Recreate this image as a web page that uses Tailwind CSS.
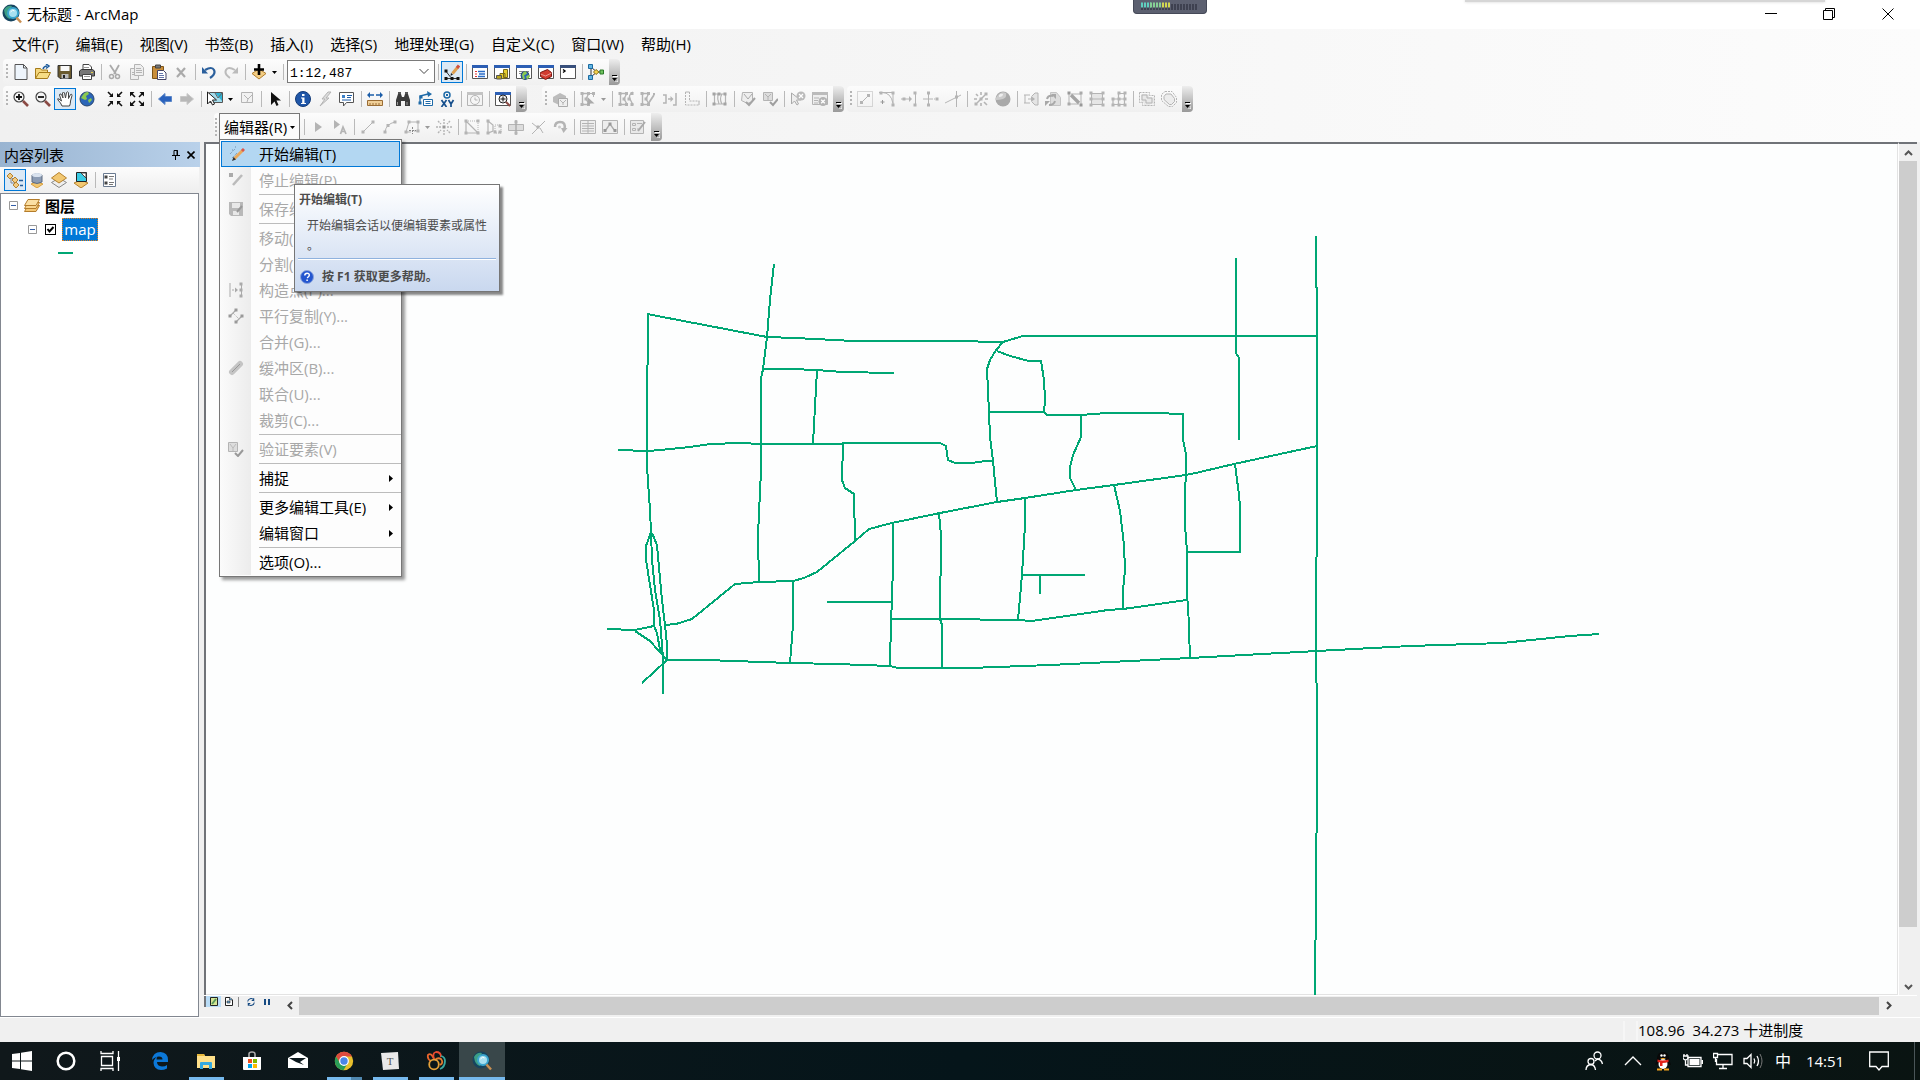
<!DOCTYPE html>
<html lang="zh-CN">
<head>
  <meta charset="UTF-8">
  <meta name="viewport" content="width=device-width, initial-scale=1.0">
  <title>无标题 - ArcMap</title>
  <script src="https://cdn.jsdelivr.net/npm/@tailwindcss/browser@4"></script>
</head>
<body class="h-screen flex flex-col overflow-hidden bg-[#f0f0f0] text-black text-[15px] leading-5 font-['Open_Sans','Noto_Sans_CJK_SC',sans-serif]">

  <!-- Title bar -->
  <header class="relative h-[29px] shrink-0 bg-white flex items-center pb-[2px]">
    <svg class="w-5 h-5 ml-[2px] mr-[5px]" viewBox="0 0 20 20" data-icon="arcmap"></svg>
    <h1>无标题 - ArcMap</h1>
    <div class="ml-auto mr-[2px] flex">
      <button aria-label="最小化" class="w-[59px] h-7 flex items-center justify-center"><svg class="w-3 h-3" viewBox="0 0 12 12"><path d="M0 5.500h12" stroke="#000"/></svg></button>
      <button aria-label="还原" class="w-[58px] h-7 flex items-center justify-center"><svg class="w-3 h-3" viewBox="0 0 12 12"><path d="M.5 2.500h9v9h-9zM2.500 2.500v-2h9v9h-2" fill="none" stroke="#000"/></svg></button>
      <button aria-label="关闭" class="w-[60px] h-7 flex items-center justify-center"><svg class="w-3 h-3" viewBox="0 0 12 12"><path d="M.5 .5l11 11M11.500 .5l-11 11" stroke="#000"/></svg></button>
    </div>
    <!-- floating meter -->
    <div class="absolute top-0 left-[59%] w-[74px] h-[14px] rounded-b-[4px] bg-[#5c6070] border-b border-x border-[#454958]">
      <svg class="ml-[7px] mt-[2px]" width="58" height="8">
        <path d="M0 5h57" stroke="#3e4150" stroke-width="6" stroke-dasharray="2 1"/>
        <path d="M0 3h10" stroke="#5fd0c0" stroke-width="5" stroke-dasharray="2 1"/>
        <path d="M9 3h12" stroke="#86cf95" stroke-width="5" stroke-dasharray="2 1"/>
        <path d="M21 3h9" stroke="#d2d850" stroke-width="5" stroke-dasharray="2 1"/>
      </svg>
    </div>
    <div class="absolute top-0 right-[95px] w-[360px] h-[2px] bg-[#d6d6d6] shadow-[0_0_3px_#ccc]"></div>
  </header>

  <!-- Menus and toolbars -->
  <div class="shrink-0 h-[113px] bg-linear-to-r from-[#f0f0f0] to-[#fcfcfc]">
    <nav class="h-[30px] flex items-center gap-[17px] pl-3 pb-px" id="menuBar"></nav>

    <div class="h-[27px] flex items-start pl-[3px]">
      <div class="h-[26px] flex rounded-sm bg-linear-to-b from-[#fcfcfc] to-[#f0f0f0]">
        <div class="flex items-center" data-tools="new open save print | cut copy paste delete | undo redo | adddata,v |"></div>
        <div class="relative ml-px w-[148px] h-[23px] mt-px border border-[#7a7a7a] bg-white">
          <select aria-label="地图比例" class="appearance-none w-full h-full pl-[2px] text-[13px] font-['Liberation_Mono',monospace] bg-transparent outline-none"><option>1:12,487</option></select>
          <svg class="absolute right-[5px] top-[7px] w-[10px] h-[7px] pointer-events-none" viewBox="0 0 10 7"><path d="M.5 1l4.500 4.500L9.500 1" fill="none" stroke="#444"/></svg>
        </div>
        <div class="flex items-center" data-tools="| edittb,on | toc catalog search toolbox python | model" data-nogrip></div>
        <div class="ml-[2px]" data-overflow></div>
      </div>
    </div>

    <div class="h-[27px] flex items-start pl-[3px]">
      <div class="h-[26px] flex rounded-sm bg-linear-to-b from-[#fcfcfc] to-[#f0f0f0]">
        <div class="flex items-center" data-tools="zoomin zoomout pan,on globe _ fixin fixout | prev next | selfeat,v clearsel | pointer | info bolt popup | measure | find route xy | time | viewer"></div>
        <div class="ml-[2px]" data-overflow></div>
      </div>
      <div class="ml-[15px] h-[26px] flex rounded-sm bg-linear-to-b from-[#fcfcfc] to-[#f0f0f0]">
        <div class="flex items-center" data-tools="cube | topoedit,v | polys polyslash alignedge gencorner | topopoly | checkshape checkbox | pointerr tableerr"></div>
        <div class="ml-[2px]" data-overflow></div>
      </div>
      <div class="ml-[3px] h-[26px] flex rounded-sm bg-linear-to-b from-[#fcfcfc] to-[#f0f0f0]">
        <div class="flex items-center" data-tools="dotsegment fillet extend trim intersect | explode sphere | shapein replace wrench rect grid | union buffer2"></div>
        <div class="ml-[2px]" data-overflow></div>
      </div>
    </div>

    <div class="h-[29px] flex items-start pl-[214px]">
      <div class="h-[28px] flex items-center rounded-sm bg-linear-to-b from-[#fcfcfc] to-[#f0f0f0]">
        <svg class="w-[5px] h-5" viewBox="0 0 5 20"><path d="M2 1v18" stroke="#b5b5b5" stroke-width="2" stroke-dasharray="2 2"/></svg>
        <div class="relative z-20">
          <button class="w-[81px] h-7 pb-px border border-b-0 border-[#777] bg-[#fbfbfb] flex items-center pl-1 whitespace-nowrap gap-[3px]" aria-expanded="true">编辑器(R)<svg class="w-[5px] h-[3px]" viewBox="0 0 5 3"><path d="M0 0h5L2.500 3z"/></svg></button>

          <div class="absolute left-0 top-[26px] w-[183px] border border-[#777] bg-[#fdfdfd] shadow-[3px_3px_3px_#0006] py-px" role="menu" id="editorMenu"></div>

          <!-- Tooltip of the first menu item -->
          <div role="tooltip" class="absolute left-[75px] top-[71px] w-[206px] h-[108px] border border-[#767676] bg-linear-to-b from-white to-[#c9d8ef] shadow-[3px_3px_2px_#0007] text-[12px] leading-5 text-[#4c4c4c]">
            <p class="pl-1 pt-[5px] font-bold">开始编辑(T)</p>
            <p class="pl-3 pt-[6px] whitespace-nowrap">开始编辑会话以便编辑要素或属性<br>。</p>
            <div class="mx-[3px] mt-[2px] h-[2px] bg-[#8fb2de] border-b border-white"></div>
            <p class="pl-[5px] pt-[7px] flex items-center font-bold gap-2">
              <svg class="w-[14px] h-[14px]" viewBox="0 0 14 14"><circle cx="7" cy="7" r="6.500" fill="#2456cf" stroke="#8aa4dc"/><path d="M4.800 5.500q0-2.300 2.300-2.300t2.200 2q0 1.200-2.200 2.600M7.100 9.500v1.500" fill="none" stroke="#fff" stroke-width="1.500"/></svg>
              按 F1 获取更多帮助。
            </p>
          </div>
        </div>
        <div class="flex items-center ml-px" data-tools="| arrow arrowa | line arc polygon,v midpoint | vertices reshape cutpoly split rotate | attrs sketch | create" data-nogrip></div>
        <div class="ml-[2px]" data-overflow></div>
      </div>
    </div>
  </div>

  <!-- Content -->
  <main class="flex-1 min-h-0 flex pr-[3px]">
    <aside class="w-[199px] shrink-0 flex flex-col">
      <div class="h-[25px] w-[200px] flex items-center pl-1 bg-linear-to-r from-[#99b4d1] to-[#b9d1ea]">
        <h2>内容列表</h2>
        <button aria-label="自动隐藏" class="ml-auto mr-[7px]"><svg class="w-2 h-[10px]" viewBox="0 0 8 10"><path d="M2 5V.5h3.500V5M5 0v5M0 5.500h8M3.500 6v4" fill="none" stroke="#000"/></svg></button>
        <button aria-label="关闭" class="mr-[5px]"><svg class="w-2 h-2" viewBox="0 0 8 8"><path d="M.5 .5l7 7M7.500 .5l-7 7" stroke="#000" stroke-width="1.600"/></svg></button>
      </div>
      <div class="h-[26px] flex items-center pl-1 bg-linear-to-b from-[#fcfcfc] to-[#eeeeee]" data-tools="listdraw,on listsrc listvis listsel | options" data-nogrip></div>
      <ul class="flex-1 border border-[#828790] bg-white">
        <li class="h-[23px] flex items-center pl-2">
          <svg class="w-[9px] h-[9px]" data-icon="minus" viewBox="0 0 9 9"></svg>
          <svg class="w-4 h-[14px] ml-[6px] mr-[5px]" viewBox="0 0 16 14"><path d="M4 6.500h11.500l-3.500 6H.5z" fill="#f5c876" stroke="#b47d2c"/><path d="M4 3.500h11.500l-3.500 6H.5z" fill="#f9d690" stroke="#b47d2c"/><path d="M4 .5h11.500l-3.500 6H.5z" fill="#fbe0a5" stroke="#b47d2c"/></svg>
          <span class="font-bold">图层</span>
        </li>
        <li class="h-6 flex items-center pl-[27px]">
          <svg class="w-[9px] h-[9px]" data-icon="minus" viewBox="0 0 9 9"></svg>
          <span class="relative ml-2 w-[11px] h-[11px]">
            <input type="checkbox" checked id="mapLayer" class="block appearance-none w-[11px] h-[11px] border border-black bg-white">
            <svg class="absolute inset-0 pointer-events-none" width="11" height="11" viewBox="0 0 11 11"><path d="M2.500 5l2 2.500L8.500 3" fill="none" stroke="#000" stroke-width="2"/></svg>
          </span>
          <label for="mapLayer" class="ml-[6px] h-[23px] w-9 flex items-center justify-center bg-[#0078d7] text-white outline-1 -outline-offset-1 outline-dotted outline-[#e08020]">map</label>
        </li>
        <li class="h-6 flex items-center pl-[57px]"><div class="w-[15px] h-[2px] bg-[#00a774]"></div></li>
      </ul>
    </aside>

    <section class="flex-1 min-w-0 ml-[5px] mb-[2px] flex flex-col">
      <div class="flex-1 min-h-0 flex">
        <div class="flex-1 min-w-0 border-l-2 border-t-2 border-[#707378] bg-[#fdfefe] border-r-0 shadow-[inset_-1px_-1px_0_#e3e3e3]">
          <svg class="block w-full h-full" aria-label="map">
            <g id="roads" transform="translate(-206,-144)" fill="none" stroke="#00a774" stroke-width="2" shape-rendering="crispEdges"></g>
          </svg>
        </div>
        <div class="w-[19px] border-t-2 border-t-[#707378] border-l border-l-white flex flex-col items-center bg-[#f0f0f0]">
          <button aria-label="向上滚动" class="h-[17px] flex items-center"><svg class="w-[9px] h-[6px]" viewBox="0 0 9 6"><path d="M1 5l3.500-3.500L8 5" fill="none" stroke="#555" stroke-width="2"/></svg></button>
          <div class="w-[18px] h-[90%] bg-[#cdcdcd]"></div>
          <button aria-label="向下滚动" class="mt-auto h-[17px] flex items-center"><svg class="w-[9px] h-[6px]" viewBox="0 0 9 6"><path d="M1 1l3.500 3.500L8 1" fill="none" stroke="#555" stroke-width="2"/></svg></button>
        </div>
      </div>
      <div class="h-[20px] shrink-0 flex items-center border-t border-white">
        <div class="self-start flex items-center h-[11px] border-l-2 border-[#707378]">
          <button aria-label="数据视图" class="w-[15px] h-[11px] flex justify-center items-center bg-[#b9dcf6]"><svg class="w-2 h-[9px]" viewBox="0 0 8 9"><path d="M.5 .5h7v8h-7z" fill="#d5e594" stroke="#222"/><path d="M2 7l4-5" stroke="#5a9a5a" stroke-width="2"/></svg></button>
          <button aria-label="布局视图" class="w-[15px] h-[11px] flex justify-center items-center"><svg class="w-2 h-[9px]" viewBox="0 0 8 9"><path d="M.5 .5h4.500l2.500 2.500v5.500h-7z" fill="#fff" stroke="#222"/><path d="M2 4h3v2H2zM4.500 .5V3h3" fill="#69a8d8" stroke="#222" stroke-width=".6"/></svg></button>
          <div class="w-px h-[10px] bg-[#888] mx-[2px]"></div>
          <button aria-label="刷新" class="w-5 h-[11px] flex justify-center items-center"><svg class="w-2 h-2" viewBox="0 0 8 8"><path d="M.7 3.500a3.300 3.300 0 0 1 6-1.500V.3M7.300 4.500a3.300 3.300 0 0 1-6 1.500v1.700M4.700 2.500h2.500M3.300 5.500H.8" fill="none" stroke="#164a82" stroke-width="1.100"/></svg></button>
          <button aria-label="暂停绘制" class="w-[11px] h-[11px] flex justify-center items-center"><svg class="w-[6px] h-[6px]" viewBox="0 0 6 6"><path d="M1 0v6M5 0v6" stroke="#164a82" stroke-width="2"/></svg></button>
        </div>
        <button aria-label="向左滚动" class="ml-[10px] w-[16px] flex justify-center"><svg class="w-[6px] h-[9px]" viewBox="0 0 6 9"><path d="M5 1L1.500 4.500 5 8" fill="none" stroke="#444" stroke-width="2"/></svg></button>
        <div class="flex-1 h-[18px] ml-px bg-[#cdcdcd]"></div>
        <button aria-label="向右滚动" class="w-[20px] flex justify-center"><svg class="w-[6px] h-[9px]" viewBox="0 0 6 9"><path d="M1 1l3.500 3.500L1 8" fill="none" stroke="#444" stroke-width="2"/></svg></button>
        <div class="w-[18px]"></div>
      </div>
    </section>
  </main>

  <footer class="h-[25px] shrink-0 border-t border-white flex justify-end">
    <div class="w-[15px] h-5 mt-[3px] border-l-2 border-r-2 border-[#f6f6f6]"></div>
    <div class="w-[274px] mr-[8px] pt-[2px] whitespace-pre">108.96  34.273 十进制度</div>
  </footer>

  <!-- Taskbar -->
  <div class="h-[38px] shrink-0 flex bg-linear-to-r from-[#10181b] via-[#05151a] to-[#0a1412] text-white">
    <div class="flex" id="taskButtons"></div>
    <div class="ml-auto flex items-center" id="tray"></div>
  </div>

  <script>
    const G = '#b4b4b4';
    const sq = (x, y, c) => `<rect x="${x - 1.5}" y="${y - 1.5}" width="3" height="3" fill="${c || G}"/>`;
    const p = (d, c, w, extra) => `<path d="${d}" fill="none" stroke="${c || G}" stroke-width="${w || 1}" ${extra || ''}/>`;
    const f = (d, c, s) => `<path d="${d}" fill="${c}" stroke="${s || 'none'}"/>`;
    const win = f('M.5 2.500h15v12H.5z', '#fff', '#555') + f('M0 1h16v3H0z', '#2d5fb4');
    const globe = (x, y, r) => `<circle cx="${x}" cy="${y}" r="${r}" fill="#2c66b8" stroke="#27456e"/><path d="M${x - r + 1} ${y - 1}q${r / 2}-${r} ${r}-${r - 1}l1 2-3 2 1 3-2 1zM${x + 1} ${y + 1}l3-2 1 2-3 3z" fill="#8cc94f"/>`;
    const nodes = p('M2.500 3v10M2.500 2.500h6M2.500 13.500h6M8.500 3L6 8l3 5', G, 1.4) + sq(2, 2.5) + sq(2, 13.5) + sq(8.5, 2.500) + sq(8.500, 13.500) + sq(6, 8);

    const icons = {
      arcmap: '<circle cx="9" cy="9" r="8.500" fill="#16445f"/><path d="M2 6q3-5 8-4l-2 4 3 3-3 6q-5-1-6-9" fill="#3d9e84"/><circle cx="11" cy="9" r="5" fill="#a8e0f0" stroke="#3ba6cf" stroke-width="2"/><path d="M8.500 8q2-3 4-1" stroke="#fff" fill="none"/><path d="M14.500 13.500l4.500 5" stroke="#c98f52" stroke-width="2.500"/>',
      minus: '<path d="M.5 .5h8v8h-8z" fill="#fff" stroke="#999"/><path d="M2 4.500h5" stroke="#335ea8"/>',
      new: f('M2 .5h8.500L14 4v11.500H2z', '#eef5fc', '#555') + p('M10.500 .5V4H14', '#555'),
      open: f('M.5 14.500V4.500h5l1 1.500h6v3', '#f5d77c', '#a57b1a') + f('M.5 14.500L4 8.500h11.500l-3 6z', '#f7dd84', '#a57b1a') + p('M8 5q1-3 4-3M11 0l3 2-3 2.500', '#1e5c9c', 1.5),
      save: f('M1 1.500h13.500v13H3l-2-2z', '#6a5a2e', '#333') + f('M3.500 2h9v5h-9z', '#f8f8f8') + f('M4.500 10h7v4.500h-7z', '#bbb') + f('M6 11h2v3H6z', '#222'),
      print: f('M4 7V.5h6L12.500 3v4', '#fff', '#444') + f('M.5 7l2-1.500h11l2 1.500v5H.5z', '#777', '#333') + f('M3.500 10.500h9v5h-9z', '#fff', '#444') + p('M5 12.500h6M5 3.500h5', '#999') + f('M12 8h2v1h-2z', '#e1cc44'),
      cut: p('M3 1l6 9M12 1L7 10', '#aaa', 1.8) + '<circle cx="4.500" cy="12.500" r="2" fill="none" stroke="#aaa" stroke-width="1.500"/><circle cx="10.500" cy="12.500" r="2" fill="none" stroke="#aaa" stroke-width="1.500"/>',
      copy: f('M1.500 4.500h8v11h-8z', '#eee', G) + f('M5.500 .5h6l3 3v8h-9z', '#eee', G) + p('M7 4.500h5M7 6.500h6M7 8.500h6M3 8.500h2M3 10.500h2'),
      paste: f('M1.500 2.500h11v12h-11z', '#c98e3b', '#7d5418') + f('M4.500 1h5v3h-5z', '#777', '#444') + f('M6.500 6.500h6l2.500 2.500v6.500H6.500z', '#fff', '#446') + p('M8 9.500h4M8 11.500h5M8 13.500h5', '#67a'),
      delete: p('M4 4l8 9M12 4l-8 9', '#aaa', 2.2),
      undo: p('M4 6q7-4 9 0t-4 8', '#2a5f9c', 2.2) + f('M1 3v6.500h6z', '#2a5f9c'),
      redo: p('M12 6q-7-4-9 0t4 8', '#bbb', 2) + f('M15 3v6.500H9z', '#bbb'),
      adddata: f('M8 5l7 4.500-7 5.500-7-5.500z', '#f3cd83', '#b07d2a') + p('M8 0v11M3 5.500h10', '#000', 2.6),
      edittb: p('M2.500 8l4 5M2 14.500h12', '#333') + sq(2, 7, '#111') + sq(2, 14.5, '#111') + sq(8, 14.5, '#111') + sq(14, 14.5, '#111') + p('M8.500 9.500l5-6', '#e0a050', 3) + p('M13 4l2-2.500', '#d05040', 3) + f('M6.500 12l.5-3 2 1.500z', '#222'),
      toc: win + p('M3 7.500h2M3 10h2M3 12.500h2', '#d33') + p('M6 7.500h7M7 10h6M6 12.500h7', '#2a6cc8', 1.3),
      catalog: win + f('M9.500 5.500h4v8h-4zM6 9.500h5v5H6z', '#e7cf2e', '#77691a') + f('M2.500 11.500h5v3.500h-5z', '#b9a61f', '#555'),
      search: win + p('M3 7.500h10M3 9.500h4', '#888') + globe(9, 11.5, 4),
      toolbox: win + f('M2.500 8.500l7-3 4 3v4l-6 3-5-3z', '#d23b30', '#7a1712') + p('M2.500 10l5 2 6-3', '#f0b0aa', .8),
      python: f('M.5 2.500h15v12H.5z', '#fff', '#555') + f('M0 1h16v3H0z', '#39507c') + p('M3 5.500l2 1.500-2 1.500', '#000', 1.4),
      model: p('M3 3v10M4 4l5 4-5 4M11 8h3', '#333') + f('M.5 .5h4v4h-4zM.5 11.500h4v4h-4z', '#62b6e4', '#1b6aa0') + f('M8 5.500l3 2.500-3 2.500L5.500 8z', '#f6d44e', '#8d721a') + f('M12 6h3.500v4H12z', '#70c25e', '#2a7a28'),
      zoomin: '<circle cx="6" cy="6" r="5" fill="#f4f4f4" stroke="#444" stroke-width="1.200"/>' + p('M3 6h6M6 3v6', '#111', 1.8) + p('M10 10l5 5', '#8b4a44', 2.6),
      zoomout: '<circle cx="6" cy="6" r="5" fill="#f4f4f4" stroke="#444" stroke-width="1.200"/>' + p('M3 6h6', '#111', 1.8) + p('M10 10l5 5', '#8b4a44', 2.6),
      pan: f('M5 15Q4 12 1 9q-1-2 1-1l2.500 2L2.500 4q0-2 2-.5L6 7 5.500 2q1-2 2 0L8.500 7 9.500 1.500q1.500-1.500 2 0L11.500 7.500l2-4q1.500-1 1.500 1L13.500 10q0 3-1 5z', '#fff', '#444'),
      globe: globe(8, 8, 7),
      fixin: p('M1 1l4 4M15 1l-4 4M1 15l4-4M15 15l-4-4', '#111', 1.6) + f('M6 6H2l4-4zM10 6h4l-4-4zM6 10H2l4 4zM10 10h4l-4 4z', '#111'),
      fixout: p('M2 2l4 4M14 2l-4 4M2 14l4-4M14 14l-4-4', '#111', 1.6) + f('M1 1h4.500L1 5.500zM15 1h-4.500L15 5.500zM1 15h4.500L1 10.500zM15 15h-4.500l4.500-4.500z', '#111'),
      prev: f('M1.500 8L8 2.500v3h6.500v5H8v3z', '#2a62bd', '#5a86c8'),
      next: f('M14.500 8L8 2.500v3H1.500v5H8v3z', '#b8b8b8', '#c8c8c8'),
      selfeat: f('M2.500 1.500h13v10h-13z', '#a4dcec', '#555') + f('M8 2h7v8z', '#2fb3d4') + p('M8 2l3 5 4-5', '#666') + f('M.5 1v12l3-3 2 4 2-1-2-4h4z', '#fff', '#222'),
      clearsel: f('M2.500 1.500h11v10h-11z', '#f2f2f2', G) + p('M5 4l4 4 4-4M9 8l-1 3'),
      pointer: f('M4 1v13l3.500-3.500L9.500 15l2-1-2-4.500H14z', '#111'),
      info: '<circle cx="8" cy="8" r="7.500" fill="#1f56a8" stroke="#123a78"/>' + f('M7 3h2.500v2H7zM6 6.500h3.500V12H11v1H6v-1h1.200V7.500H6z', '#fff'),
      bolt: f('M11 1L5 8h3l-5 7 9-8H9l5-6z', '#ddd', G),
      popup: f('M.5 1.500h14v10h-7l-3 3.500v-3.500h-4z', '#fff', '#555') + f('M3 4h3v3H3z', '#3b80c8') + p('M8 4.500h5M8 6.500h4M3 9h9', '#1a5ba6'),
      measure: f('M.5 9.500h15v5H.5z', '#f0cf98', '#9a6c34') + p('M3 12v2M6 12v2M9 12v2M12 12v2', '#9a6c34') + p('M2 4h5M9 4h5', '#1b5da8', 1.5) + f('M0 4l3-3v6zM16 4l-3-3v6z', '#1b5da8'),
      find: f('M1 15V9l2-6h3l1 3h2l1-3h3l2 6v6h-5v-5H6v5z', '#3b3b3b') + f('M3 1h3v2H3zM10 1h3v2h-3z', '#555') + p('M2.500 11v3M12 11v3', '#999'),
      route: p('M3 11V5l8-2', '#1e6aa8', 1.3) + sq(3, 12, '#1e6aa8') + sq(4, 6, '#1e6aa8') + f('M10 0l5 3-4 3z', '#1e6aa8') + f('M6.500 8.500h9v6h-9z', '#fff', '#1e6aa8') + p('M8.500 10.500h5M8.500 12.500h5', '#1e6aa8'),
      xy: '<circle cx="8" cy="4" r="3" fill="none" stroke="#1e6aa8" stroke-width="1.500"/>' + f('M7 3h2v2H7z', '#1e6aa8') + p('M2.500 9l5 7M7.500 9l-5 7M9.500 9l2.500 4v3M14.500 9L12 13', '#164f8c', 1.7),
      time: f('M.5 1.500h15v13H.5z', '#f4f4f4', G) + f('M0 1h16v3H0z', '#c4c4c4') + '<circle cx="8" cy="9" r="4.500" fill="#f6f6f6" stroke="#b4b4b4"/>' + p('M8 6.500V9h2.500'),
      viewer: win + '<circle cx="8" cy="8" r="4" fill="#eee" stroke="#222"/>' + p('M5.500 8h5M8 5.500v5', '#111') + p('M11 11l4 4', '#8b4a44', 2),
      cube: f('M1 6l7-4 6 3v3H7v6l-6-3z', '#bcbcbc') + f('M6.500 7.500h9v8h-9z', '#eee', '#aaa') + p('M8 9l3 3 3-3M11 12v2'),
      topoedit: nodes + sq(13.5, 2.500) + p('M9 2.500h4M13.500 3v3') + f('M7.500 6v9l3-2.500 4 0z', '#aaa'),
      polys: nodes + p('M15 1q-5 3-3 7t3 6', G, 1.4) + sq(14, 2.5) + sq(14, 13.5) + sq(11, 8),
      polyslash: nodes + p('M14 4L8 13M13 3h2', G, 1.8),
      alignedge: p('M1 4h3v8H1M6 8h4M14 2v12h-3', G, 1.5) + f('M8.500 5l3 3-3 3z', G),
      gencorner: p('M1.500 1v13h14M5.500 1v9h10', G, 1, 'stroke-dasharray="2 1"') + p('M1.500 1h4M15 10v4'),
      topopoly: p('M2.500 3v10h11V3zM6 3q-1 5 1 10M10 3q-3 5 0 10', G, 1.2) + sq(2, 3, '#a4a4a4') + sq(13, 3, '#a4a4a4') + sq(2, 13, '#a4a4a4') + sq(13, 13, '#a4a4a4') + sq(7, 3, '#a4a4a4'),
      checkshape: f('M2.500 1.500h10v9l-5 2-6-3z', '#eee', G) + p('M4 3l4 5 4-5', '#aaa') + p('M6 11l3 3 6-7', '#a4a4a4', 2),
      checkbox: f('M1.500 1.500h9v8h-9z', '#ddd', G) + p('M3 3l3 3 3-3M6 6v3') + p('M8 11l3 3 5-6', '#9f9f9f', 2),
      pointerr: f('M1.500 2v11l3-3 2.500 4 1.500-1-2-4h4z', '#eee', '#aaa') + '<circle cx="11" cy="5" r="4.500" fill="#bbb"/>' + p('M9 3l4 4M13 3L9 7', '#fff', 1.3),
      tableerr: f('M.5 1.500h15v12H.5z', '#eee', G) + f('M0 1h16v3H0z', '#bbb') + p('M2 7h5M2 9.500h4M2 12h4') + '<circle cx="11" cy="10.500" r="4.500" fill="#b4b4b4"/>' + p('M9.200 8.700l3.600 3.600M12.800 8.700l-3.600 3.600', '#fff', 1.3),
      dotsegment: p('M.5 .5h15v15H.5z', G, 1, 'stroke-dasharray="1 1"') + p('M4 12l8-8') + sq(4.5, 11.5) + sq(11.5, 4.5),
      fillet: p('M0 1.500h14v13M3 1.500q9 0 11 11') + sq(2, 2) + sq(14, 2) + sq(14, 14) + p('M3.500 9v4M1.500 11h4', '#999'),
      extend: p('M0 8h10M14.500 1v14') + sq(3, 8) + sq(14, 2) + sq(14, 14) + f('M8 5l3 3-3 3z', G),
      trim: p('M0 8h9M5.500 1v14') + p('M9 8h6', G, 1, 'stroke-dasharray="1 1"') + sq(5.5, 2) + sq(5.5, 14) + sq(14, 8),
      intersect: p('M0 12L16 4M11.500 0v16') + sq(11.5, 6),
      explode: p('M4 12l8-8', G, 1.4) + sq(8, 8) + sq(3, 13) + sq(13, 3) + p('M3 3l2 2M8 1v3M1 8h3M12 8h3M8 12v3M11 11l3 3', G, 1.6),
      sphere: '<circle cx="8" cy="8" r="7.500" fill="#a9a9a9"/><path d="M3 4q3-4 8-2 1 5-3 6T1.500 9 3 4" fill="#ccc"/><path d="M4 4q2-2 4-1 0 3-4 3z" fill="#eee"/>',
      shapein: f('M9 5l3-3h3v12h-3l-3-3', '#e4e4e4', G) + p('M1 4h6M1 12h6M2 4v8M5 8h4') + f('M8 5l4 3-4 3z', G),
      replace: f('M5.500 1.500h6l4 5v8h-10z', '#ddd', '#c4c4c4') + p('M2 8q1-4 6-3M10 10q-1 4-6 4', '#a8a8a8', 2) + f('M6 3h5v5zM0 15v-5h5z', '#a8a8a8'),
      wrench: p('M2 3v10h10M4 3h10v10', G) + p('M4 4l8 8', '#a4a4a4', 3.4) + sq(2, 13, '#aaa') + sq(14, 2, '#aaa') + sq(2, 2, '#999') + sq(14, 14, '#999'),
      rect: f('M2.500 2.500h11v11h-11z', '#e6e6e6', G) + p('M2 8h12') + sq(2, 2) + sq(14, 2) + sq(2, 8) + sq(14, 8) + sq(2, 14) + sq(14, 14),
      grid: p('M7.500 2v12M13.500 2v12M7.500 2.500h6M1 8h13M1 13.500h13M2 8v6', G, 1.2) + sq(8, 2) + sq(14, 2) + sq(2, 8) + sq(8, 8) + sq(14, 8) + sq(2, 14) + sq(8, 14) + sq(14, 14),
      union: f('M2 3h8v3h5v7h-4v2H5v-3H2z', '#e8e8e8') + p('M.5 1.500h10v3h5v10h-12v-3h-3z', G, 1, 'stroke-dasharray="2 1"') + p('M3 4h5v3h5v5H7v-3H3z'),
      buffer2: p('M4 .5h7l4.500 6v5l-4 4h-4l-7-6v-6z', G, 1, 'stroke-dasharray="2 1"') + f('M5 3h5l3.500 4.500v3l-3 3h-2L3 8.500v-3z', '#ececec', G),
      arrow: f('M5 3v10l7-5z', G),
      arrowa: f('M2 1v9l6-4.500z', G) + p('M8.500 15l2.500-7 3 7M9.500 12.500h3.500', G, 1.7),
      line: p('M2 14L14 2') + sq(3, 13) + sq(13, 3),
      arc: p('M3 13q1-8 10-10') + sq(3, 13) + sq(6, 6.5) + sq(13, 3),
      polygon: p('M5 3h9v9h-4M5 3L2 13h5') + sq(5, 3) + sq(14, 3) + sq(14, 12) + sq(2, 13) + p('M8.500 8v7M5 11.500h7', '#888', 1, 'stroke-dasharray="2 1"'),
      midpoint: sq(8, 8, '#999') + p('M8 0v5M8 11v5M0 8h5M11 8h5M2 2l3 3M14 2l-3 3M2 14l3-3M14 14l-3-3', G, 1.4, 'stroke-dasharray="2 1"'),
      vertices: p('M2 2v12h12L2 2', G, 1.2) + p('M2 2h12v12', G, 1, 'stroke-dasharray="1 1"') + sq(2, 2) + sq(14, 2) + sq(2, 14) + sq(14, 14),
      reshape: p('M2 2v12l5-2V6z', G, 1.2) + p('M9 6h6v8H9z', G, 1, 'stroke-dasharray="1 1"') + sq(2, 2) + sq(2, 14) + sq(14, 7) + sq(14, 13) + sq(9, 13),
      cutpoly: f('M.5 5.500h15v6H.5z', '#ddd', G) + p('M8 1v15', '#aaa', 1.4) + sq(8, 3) + sq(8, 14),
      split: p('M2 15L15 2M2 4l5 4M10 9l3 5') + sq(8, 8),
      rotate: p('M3 8q0-5 5-5 6 0 4.500 7', G, 2.5) + f('M9 9h6.500l-4 5z', G) + '<circle cx="7.500" cy="8" r="1.500" fill="#ccc"/>',
      attrs: f('M.5 1.500h15v13H.5z', '#eee', G) + p('M8 2v12M2 4.500h12M2 7h12M2 9.500h12M2 12h12'),
      sketch: f('M.5 1.500h15v13H.5z', '#eee', G) + p('M3 12l5-7 5 7', '#aaa', 1.3) + sq(3, 11.5, '#999') + sq(8, 5, '#999') + sq(13, 11.5, '#999'),
      create: f('M.5 1.500h13v13H.5z', '#e9e9e9', G) + p('M2.500 4.500h3v2h-3zM2.500 9.500h3v2h-3zM7 4.500h5M7 10h3') + p('M8 12l7-9', '#aaa', 2),
      listdraw: p('M4 5l5 5M4 5v6h4', '#888') + f('M3 1l3 3-3 3-3-3zM8 5l3 3-3 3-3-3zM9 10l3 3-3 3-3-3z', '#f2cb80', '#b5822f') + p('M12 8.500h4M13 13.500h3', '#245c98', 1.6),
      listsrc: f('M8 10l6 2-6 4-6-4z', '#f2c872', '#d8a040') + f('M3 3q5-3 10 0v7q-5 3-10 0z', '#8c9cb4', '#5c6b80') + '<ellipse cx="8" cy="3" rx="5" ry="2" fill="#d9e2ee"/>',
      listvis: f('M8 6l7.500 4.500L8 15.500.5 10.500z', '#eee', '#888') + f('M8 .5l7.500 5.500L8 11 .5 6z', '#f2c872', '#b5822f'),
      listsel: f('M8 8l7 3-7 5-7-5z', '#f2c872', '#b5822f') + f('M3.500 .5h10v9h-10z', '#39cbe4', '#222') + f('M8 1h5v5z', '#fff', '#444'),
      options: f('M2.500 1.500h12v13h-12z', '#fff', '#6a7a90') + p('M8 4.500h5M8 7h4M8 10.500h5M8 12.500h4', '#777') + sq(5, 5, '#444') + sq(5, 11, '#444'),
      mstart: p('M1 8l5-5M3 12l5-5M3 4h1M6 1h1', '#6c8dab', 1, 'stroke-dasharray="1 1"') + p('M5.500 12.500l8-8', '#e9a95c', 3) + p('M13 5l2-2', '#d8584c', 3) + f('M3 15l1.500-4 2.500 2.500z', '#333'),
      mstop: f('M1 1h4v4H1z', '#aaa') + p('M5 13l9-10', '#bbb', 2.6),
      msave: f('M1 1h14v14H3l-2-2z', '#b8b8b8') + f('M4 2h8v5H4zM5 10h6v4H5z', '#e8e8e8') + p('M9 11l5-6', '#999', 2),
      mpoints: p('M2 1v14M13.500 1v14M4 8h2', '#aaa') + f('M7 5.500l3 2.500-3 2.500z', '#aaa') + sq(13, 2, '#aaa') + sq(13, 8, '#aaa') + sq(13, 14, '#aaa'),
      mparallel: p('M2 8l6-6M8 14l6-6', '#aaa', 1.2) + p('M5 5l6 6', '#aaa', 1, 'stroke-dasharray="1 1"') + sq(2, 8, '#999') + sq(8, 2, '#999') + sq(8, 14, '#999') + sq(14, 8, '#999'),
      mbuffer: '<path d="M4 12l8-8" stroke="#c4c4c4" stroke-width="6" stroke-linecap="round"/>' + p('M4 12l8-8', '#999'),
      mcheck: f('M.5 1.500h9v9h-9z', '#ddd', G) + p('M2 3l3 4 3-4M5 7v3', '#bbb') + p('M7 12l3 3 5-6', '#999', 2)
    };
    const svg = (name) => `<svg class="w-4 h-4 shrink-0" viewBox="0 0 16 16">${icons[name]}</svg>`;

    document.querySelectorAll('[data-icon]').forEach(el => { el.innerHTML = icons[el.dataset.icon]; });

    // Toolbars: "|" is a separator, "_" a gap, ",v" adds a drop arrow, ",on" is a pressed button
    document.querySelectorAll('[data-tools]').forEach(el => {
      const grip = 'nogrip' in el.dataset ? '' : '<svg class="w-[7px] h-5" viewBox="0 0 7 20"><path d="M4 2v16" stroke="#b5b5b5" stroke-width="2" stroke-dasharray="2 2"/></svg>';
      el.innerHTML = grip + el.dataset.tools.split(' ').map(item => {
        if (item === '|') return '<div class="w-[6px] h-4 flex justify-center"><div class="w-px bg-[#b9b9b9]"></div></div>';
        if (item === '_') return '<div class="w-[6px]"></div>';
        const [name, flag] = item.split(',');
        if (flag === 'on') return `<button aria-label="${name}" class="w-[22px] h-[22px] flex items-center justify-center border border-[#0078d7] bg-[#dbe9f5]">${svg(name)}</button>`;
        const gray = icons[name].includes(G);
        const drop = flag === 'v' ? `<svg class="w-[5px] h-[3px] ml-[2px] mr-[3px]" viewBox="0 0 5 3"><path d="M0 0h5L2.500 3z" fill="${gray ? '#999' : '#000'}"/></svg>` : '';
        return `<button aria-label="${name}" class="h-[22px] flex items-center"><span class="w-[22px] flex justify-center">${svg(name)}</span>${drop}</button>`;
      }).join('');
    });

    document.querySelectorAll('[data-overflow]').forEach(el => {
      el.className += ' self-stretch flex';
      el.innerHTML = '<button aria-label="更多" class="w-[11px] flex items-end justify-center pb-[3px] rounded-r-sm bg-linear-to-b from-[#eeeeee] to-[#999999]"><svg class="w-[6px] h-[7px]" viewBox="0 0 6 7"><path d="M1 1.500h5M3 7h3V4" stroke="#fff" fill="none"/><path d="M0 .5h5" stroke="#000"/><path d="M0 3h5L2.500 6z"/></svg></button>';
    });

    document.getElementById('menuBar').innerHTML = ['文件(F)', '编辑(E)', '视图(V)', '书签(B)', '插入(I)', '选择(S)', '地理处理(G)', '自定义(C)', '窗口(W)', '帮助(H)']
      .map(t => `<button class="whitespace-nowrap">${t}</button>`).join('');

    // [text, icon, state]
    const editorItems = [
      ['开始编辑(T)', 'mstart', 'hot'], ['停止编辑(P)', 'mstop', 'off'], null, ['保存编辑内容(S)', 'msave', 'off'], null,
      ['移动(M)...', '', 'off'], ['分割(S)...', '', 'off'], ['构造点(P)...', 'mpoints', 'off'], ['平行复制(Y)...', 'mparallel', 'off'],
      ['合并(G)...', '', 'off'], ['缓冲区(B)...', 'mbuffer', 'off'], ['联合(U)...', '', 'off'], ['裁剪(C)...', '', 'off'], null,
      ['验证要素(V)', 'mcheck', 'off'], null, ['捕捉', '', 'sub'], null, ['更多编辑工具(E)', '', 'sub'], ['编辑窗口', '', 'sub'], null, ['选项(O)...', '', '']
    ];
    const strip = '<div class="self-stretch w-[31px] flex items-center justify-center bg-linear-to-r from-[#fbfbfb] to-[#ececec]">';
    document.getElementById('editorMenu').innerHTML = editorItems.map(item => {
      if (!item) return `<div class="h-[3px] flex">${strip}</div><div class="flex-1 ml-2 mt-px h-px bg-[#bcbcbc]"></div></div>`;
      const [text, icon, state] = item;
      if (state === 'hot') return `<button role="menuitem" class="mx-px w-[179px] h-[26px] flex items-center border border-[#0078d7] bg-[#b3d7f2]"><span class="w-[29px] flex justify-center">${svg(icon)}</span><span class="ml-2">${text}</span></button>`;
      const tip = state === 'sub' ? '<svg class="w-1 h-[7px] ml-auto mr-2" viewBox="0 0 4 7"><path d="M0 0v7l4-3.500z"/></svg>' : '';
      const tone = state === 'off' ? 'text-[#a8a8a8]' : 'text-black';
      return `<button role="menuitem" class="w-full h-[26px] flex items-center whitespace-nowrap ${tone}">${strip}${icon ? svg(icon) : ''}</div><span class="ml-2">${text}</span>${tip}</button>`;
    }).join('');

    // Road network
    const roads = [
      '648,314 648,364 647,366 647,467 650,510 651,532',
      '647,314 767,337 795,338 854,341 952,341 1003,342 1013,339 1023,336 1317,336',
      '774,264 770,300 767,337 763,369 761,379 761,470 758,535 759,583',
      '762,369 790,369 817,370 842,372 894,373', '817,370 813,443',
      '618,450 648,451 660,450 690,447 710,444 740,443 761,444 843,444 843,443 940,443 946,446 948,460 955,463 972,463 985,461 993,461',
      '843,443 842,480 845,488 854,494 855,541',
      '1003,342 996,350 990,360 987,369 989,412 990,437 993,461 997,502',
      '997,351 1010,356 1029,361 1041,361 1044,380 1045,400 1044,412 1047,415 1081,415 1107,413 1155,413 1183,414 1183,439 1186,455 1186,475 1185,490 1185,525 1187,552 1187,600 1188,602 1190,658',
      '989,412 1044,412', '1081,415 1081,437 1073,455 1070,467 1070,478 1076,490',
      '664,625 676,624 692,619 735,584 759,582 793,581 804,578 817,572 855,541 869,529 892,523 940,513 997,502 1025,498 1076,490 1114,485 1186,475 1200,472 1234,464 1317,446',
      '1236,258 1236,353 1239,358 1239,440', '1235,464 1239,495 1240,507 1240,552 1186,552',
      '1316,236 1316,287 1317,288 1317,556 1316,558 1316,682 1317,684 1317,780 1315,995',
      '667,660 706,660 790,663 836,664 890,666 898,668 970,668 1050,665 1190,658 1317,651 1410,646 1502,643 1570,636 1599,634',
      '793,581 793,625 790,663', '893,524 893,560 892,602 891,619 890,666', '827,602 891,602',
      '939,513 941,535 940,619 942,625 942,668',
      '891,619 940,619 1018,620 1032,621 1108,610 1123,609 1187,600',
      '1025,498 1025,525 1022,575 1018,620', '1022,575 1085,575', '1040,575 1040,594',
      '1114,485 1120,511 1124,545 1125,570 1123,590 1123,609',
      '651,532 646,546 646,560 654,610 654,626 635,630 607,629', '635,631 650,641 667,660',
      '654,626 657,633 660,650 665,659', '651,532 652,560 655,590 660,620 663,658 663,694',
      '652,533 657,545 662,600 665,625 667,645 667,660', '667,660 642,683'
    ];
    document.getElementById('roads').innerHTML = roads.map(r => `<polyline points="${r}"/>`).join('');

    // Taskbar buttons: [label, drawing, running]
    const tasks = [
      ['开始', '<path d="M0 3l8-1v7.500H0zM9 1.800L20 0v9.500H9zM0 10.500h8V18l-8-1zM9 10.500h11V20L9 18.200z" fill="#fff"/>'],
      ['Cortana', '<circle cx="10" cy="10" r="8.300" fill="none" stroke="#fff" stroke-width="2.500"/>'],
      ['任务视图', '<path d="M1 0v2.500h12V0M1 20v-2.500h12V20M1.500 5.500h11v9h-11zM18.500 0v20" fill="none" stroke="#fff" stroke-width="1.300"/><path d="M17 6h3v4h-3z" fill="#fff"/>'],
      ['Edge', '<path d="M2 9Q3 1 10.500 1 18 1.500 18 9v2H7q0 4 5 4.500 3 0 5-1.500v3.500q-3 1.500-6 1.500-7-.5-7.500-7 0-4 4-6.500-1 1.500-1 3h6q0-3-3.500-3Q5 5.500 2 9z" fill="#0c78d8"/>'],
      ['文件资源管理器', '<path d="M1 3h7l1 2h10v12H1z" fill="#ffe08a"/><path d="M1 3h7l1 2H1z" fill="#e8b93c"/><path d="M4 18v-6q0-1 1-1h10q1 0 1 1v6h-3v-4H7v4z" fill="#35a9e0"/>', 1],
      ['应用商店', '<path d="M1 6h18v12q0 1-1 1H2q-1 0-1-1z" fill="#fff"/><path d="M7 6V3q0-2 3-2t3 2v3" fill="none" stroke="#aaa" stroke-width="1.600"/><path d="M6 8h4v4H6z" fill="#f04e1f"/><path d="M11 8h4v4h-4z" fill="#7fba00"/><path d="M6 13h4v4H6z" fill="#00a4ef"/><path d="M11 13h4v4h-4z" fill="#ffb900"/>'],
      ['邮件', '<path d="M0 7l10-6 10 6v10H0z" fill="#fff"/><path d="M1 7h17l-6 4 4 3-8-3z" fill="#0a171c"/>'],
      ['Chrome', '<circle cx="10" cy="10" r="9.200" fill="#e8bf2c"/><path d="M2 5.500A9.200 9.200 0 0 1 18 5.500H10L6 12z" fill="#dd4b3e"/><path d="M2 5.500A9.200 9.200 0 0 0 9.500 19.200L13.500 12.500 6 12z" fill="#2a9d57"/><circle cx="10" cy="10" r="4.300" fill="#4a86e8" stroke="#fff" stroke-width="1.200"/>', 2],
      ['Typora', '<path d="M1 2l17-1 1 17-16 1z" fill="#e9e9e9"/><text x="10" y="14" text-anchor="middle" font-size="11" font-family="Liberation Serif" fill="#555">T</text>', 1],
      ['Navicat', '<g fill="none" stroke-width="1.800"><path d="M5 10Q1 8 2 4q3-3 6 4" stroke="#e8642c"/><path d="M8 8Q6 2 10 1q5 0 5 5" stroke="#e84a30"/><path d="M15 5q4 1 4 5 0 6-5 8" stroke="#3aa8a0"/><path d="M9 9q3-3 6-1 3 4-1 6" stroke="#e07a30"/><circle cx="8" cy="13.500" r="4.800" stroke="#e3a13a"/></g>', 1],
      ['ArcMap', icons.arcmap, 3]
    ];
    document.getElementById('taskButtons').innerHTML = tasks.map(([label, art, run], i) => {
      const size = i < 3 ? 'w-11' : 'w-[46px]';
      const gap = i === 3 ? 'ml-[5px]' : '';
      const bg = run === 3 ? 'bg-[#39474a]' : '';
      const bar = run === 3 ? '<span class="w-full h-[3px] bg-[#76b9ed]"></span>'
        : run === 2 ? '<span class="w-[35px] h-[3px] bg-[#76b9ed] border-r-[11px] border-[#5088b0]"></span>'
        : run ? '<span class="w-[35px] h-[3px] bg-[#76b9ed]"></span>' : '<span class="h-[3px]"></span>';
      return `<button aria-label="${label}" class="${size} ${gap} ${bg} h-[38px] flex flex-col items-center justify-between pt-[9px]"><svg class="w-5 h-5" viewBox="0 0 20 20">${art}</svg>${bar}</button>`;
    }).join('');

    const w = 'fill="none" stroke="#fff" stroke-width="1.300"';
    const trayItem = (label, art) => `<button aria-label="${label}" class="w-[30px] flex justify-center"><svg class="w-5 h-5" viewBox="0 0 20 20">${art}</svg></button>`;
    document.getElementById('tray').innerHTML =
      `<div class="mr-[9px]">${trayItem('人脉', `<g ${w}><circle cx="13.500" cy="4.500" r="3.500"/><circle cx="7" cy="10.500" r="3"/><path d="M2 19q0-5 5-5.500 4 .5 4.500 5.500M11 10l2.500-2q4 .5 5 5"/></g>`)}</div>` +
      trayItem('显示隐藏的图标', `<path d="M2 14l8-8 8 8" ${w}/>`) +
      trayItem('QQ', '<path d="M4 8q0-7 6-7t6 7l2 6-3-1-1 3H6l-1-3-3 1z" fill="#080808"/><ellipse cx="10" cy="13" rx="4.500" ry="5" fill="#fff"/><path d="M4.500 8.500q5 2 11 0v2.500q-3 1-6 1v3H7v-3.500l-2.500-.5z" fill="#e2231a"/><path d="M7 7h6l-3 1.500zM4 17.500h5v2H4zM11 17.500h5v2h-5z" fill="#f6a31c"/><circle cx="8.500" cy="4.500" r="1.200" fill="#fff"/><circle cx="11.500" cy="4.500" r="1.200" fill="#fff"/>') +
      trayItem('电池', `<path d="M5 6.500h13v9H5z" ${w}/><path d="M6.500 8h10v6h-10zM18.500 9h1.500v4h-1.500z" fill="#fff"/><path d="M1 3v2M4 3v2M0 5h5v2q-1 2-2.500 2T0 7zM2.500 9v5H5" ${w}/>`) +
      trayItem('网络', `<path d="M5 3.500h14v10H3.500V8M6 17.500h8M10 14v3M.5 2.500h4v4h-4zM2.500 6v5" ${w}/>`) +
      trayItem('音量', `<path d="M1 7.500h3l4-4v13l-4-4H1z" ${w}/><path d="M11 7.500q1.500 2.500 0 5M14 5q3 5 0 10" ${w}/><path d="M17 3q4 7 0 14" fill="none" stroke="#777"/>`) +
      '<button class="w-[30px] text-[16px]">中</button>' +
      '<time class="w-[54px] text-center text-[15px]">14:51</time>' +
      `<div class="ml-[12px] mr-[20px]">${trayItem('通知', `<path d="M.7 1h18.600v14.500H13L10 19l-3-3.500H.7z" ${w}/>`)}</div>` +
      '<div class="w-[6px] h-[38px] border-l border-[#4a5558]"></div>';
  </script>
</body>
</html>
